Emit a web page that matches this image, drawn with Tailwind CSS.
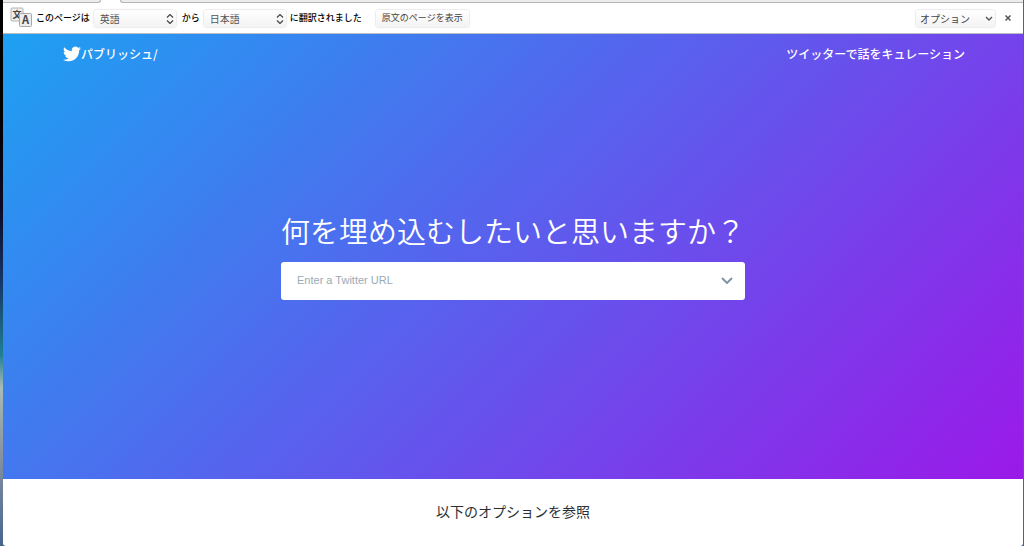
<!DOCTYPE html>
<html lang="ja">

<head>
    <meta charset="UTF-8">
    <meta name="viewport" content="width=device-width, initial-scale=1.0">
    <title>Twitter Publish</title>
    <script src="https://cdn.jsdelivr.net/npm/@tailwindcss/browser@4"></script>
</head>

<body class="flex min-h-screen bg-[#48658f] font-['Noto_Sans_CJK_JP',sans-serif]">
    <!-- Desktop showing at the left edge -->
    <div
        class="w-[3px] shrink-0 bg-[linear-gradient(#000_20%,#0a0a28_38%,#14386b_52%,#1f7f95_65%,#a9bbb5_71%,#8b96a3_82%,#48658f)]">
    </div>

    <div class="mr-px flex min-w-0 flex-1 flex-col overflow-hidden rounded-b-[3px] bg-white">
        <!-- Tab strip -->
        <div class="flex h-[3px]">
            <div class="w-[98px] rounded-br-sm border-r border-b border-[#b5b5b5] bg-[#ececec]"></div>
            <div class="w-[19px]"></div>
            <div class="flex-1 rounded-bl-sm border-b border-l border-[#b5b5b5] bg-[#ececec]"></div>
        </div>

        <!-- Translate bar -->
        <form class="flex h-[31px] items-center border-b border-[#b9bcc2] pl-[7px] text-[9px] font-medium text-black">
            <svg class="mr-1 size-[22px] shrink-0" viewBox="0 0 22 22" aria-hidden="true">
                <rect x="1" y="1" width="12" height="13" rx="1" fill="#ededed" stroke="#b4b4b4" />
                <text x="7" y="11" font-size="9" font-weight="700" text-anchor="middle" fill="#444">文</text>
                <rect x="9.500" y="6.500" width="12" height="13" rx="1" fill="#ededed" stroke="#a8a8a8" />
                <text x="15.500" y="17" font-size="11" font-weight="700" text-anchor="middle" fill="#444">A</text>
            </svg>
            <label for="from">このページは</label>
            <div class="relative mr-1.5 ml-1">
                <select id="from"
                    class="block h-[17px] w-[82px] appearance-none rounded-[3px] bg-linear-to-b from-white to-[#f3f3f3] px-1.5 text-[10px] font-normal text-[#555] shadow-[0_0_1px_1px_#ececec]">
                    <option>英語</option>
                </select>
                <svg class="pointer-events-none absolute top-1 right-0.5 h-[10px] w-2" viewBox="0 0 8 10" fill="none"
                    stroke="#444" stroke-width="1.200">
                    <path d="M1 3.500l3-3 3 3M1 6.500l3 3 3-3" />
                </svg>
            </div>
            <label for="to">から</label>
            <div class="relative mx-1">
                <select id="to"
                    class="block h-[17px] w-[82px] appearance-none rounded-[3px] bg-linear-to-b from-white to-[#f3f3f3] px-1.5 text-[10px] font-normal text-[#555] shadow-[0_0_1px_1px_#ececec]">
                    <option>日本語</option>
                </select>
                <svg class="pointer-events-none absolute top-1 right-0.5 h-[10px] w-2" viewBox="0 0 8 10" fill="none"
                    stroke="#444" stroke-width="1.200">
                    <path d="M1 3.500l3-3 3 3M1 6.500l3 3 3-3" />
                </svg>
            </div>
            <span>に翻訳されました</span>
            <button type="button"
                class="ml-3.5 h-[17px] rounded-[3px] bg-linear-to-b from-white to-[#f3f3f3] px-1.5 font-normal text-[#444] shadow-[0_0_1px_1px_#ececec]">原文のページを表示</button>
            <div class="relative ml-auto">
                <select aria-label="オプション"
                    class="block h-[17px] w-[79px] appearance-none rounded-[3px] bg-linear-to-b from-white to-[#f3f3f3] px-1 text-[10px] font-normal text-[#444] shadow-[0_0_1px_1px_#ececec]">
                    <option>オプション</option>
                </select>
                <svg class="pointer-events-none absolute top-1.5 right-0.5 h-[5px] w-2" viewBox="0 0 8 5" fill="none"
                    stroke="#555" stroke-width="1.400">
                    <path d="M1 1l3 3 3-3" />
                </svg>
            </div>
            <button type="button" aria-label="閉じる" class="mr-3 ml-2.5">
                <svg class="size-[6px]" viewBox="0 0 6 6" stroke="#555" stroke-width="1.500">
                    <path d="M.5.5l5 5M5.500.5l-5 5" />
                </svg>
            </button>
        </form>

        <!-- Hero -->
        <main class="flex flex-1 flex-col bg-[linear-gradient(135deg,#1da1f2,#9b19e8)] text-white">
            <header class="flex h-10 items-center justify-between pr-[58px] pl-[60px] text-xs font-medium">
                <a href="#" class="flex items-center">
                    <svg class="size-[18px]" viewBox="0 0 24 24" fill="currentColor" aria-hidden="true">
                        <path
                            d="M23.953 4.570a10 10 0 01-2.825.775 4.958 4.958 0 002.163-2.723c-.951.555-2.005.959-3.127 1.184a4.920 4.920 0 00-8.384 4.482C7.690 8.095 4.067 6.130 1.640 3.162a4.822 4.822 0 00-.666 2.475c0 1.710.870 3.213 2.188 4.096a4.904 4.904 0 01-2.228-.616v.060a4.923 4.923 0 003.946 4.827 4.996 4.996 0 01-2.212.085 4.936 4.936 0 004.604 3.417 9.867 9.867 0 01-6.102 2.105c-.390 0-.779-.023-1.170-.067a13.995 13.995 0 007.557 2.209c9.053 0 13.998-7.496 13.998-13.985 0-.210 0-.420-.015-.630A9.935 9.935 0 0024 4.590z" />
                    </svg>
                    パブリッシュ/
                </a>
                <a href="#">ツイッターで話をキュレーション</a>
            </header>

            <div class="flex flex-1 flex-col items-center justify-center px-4 pb-10">
                <h1 class="mb-4 text-center text-[29px] leading-8 font-[350]">何を埋め込むしたいと思いますか？</h1>
                <div class="flex h-[38px] w-full max-w-[464px] items-center rounded-[3px] bg-white pr-3">
                    <input type="text" aria-label="Twitter URL" placeholder="Enter a Twitter URL"
                        class="min-w-0 flex-1 px-4 font-['Liberation_Sans',sans-serif] text-[11px] text-[#14171a] outline-none placeholder:text-[#9aaab6]">
                    <button type="button" aria-label="オプションを開く">
                        <svg class="h-[7px] w-3" viewBox="0 0 12 7" fill="none" stroke="#7f95a5" stroke-width="2">
                            <path d="M1 1l5 5 5-5" />
                        </svg>
                    </button>
                </div>
            </div>
        </main>

        <section class="pt-6 pb-[27px] text-center">
            <h2 class="text-sm leading-4 text-[#292f33]">以下のオプションを参照</h2>
        </section>
    </div>
</body>

</html>
